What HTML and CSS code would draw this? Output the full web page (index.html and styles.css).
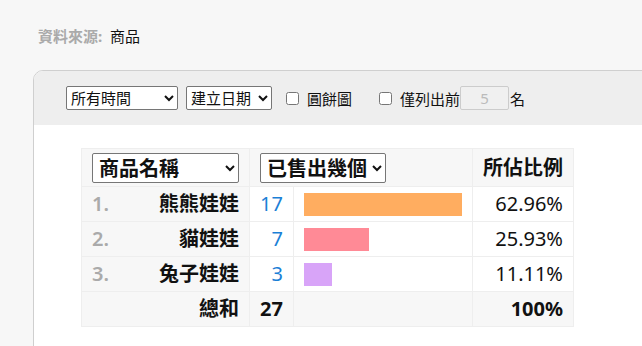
FILE: index.html
```html
<!DOCTYPE html>
<html>
<head>
    <link rel="stylesheet" href="styles.css">
</head>
<body>

    <div class="source">
        <span class="source-label">資料來源:</span> 商品
    </div>

    <div class="card">
        <div class="toolbar">
            <select class="range">
                <option>所有時間</option>
                <option>今天</option>
                <option>本週</option>
            </select>
            <select class="date-field">
                <option>建立日期</option>
                <option>更新日期</option>
            </select>
            <label class="check"><input type="checkbox">圓餅圖</label>
            <label class="check top-n"><input type="checkbox">僅列出前<input type="text" class="top-count" placeholder="5" disabled>名</label>
        </div>

        <div class="report">
            <table class="stats">
                <colgroup>
                    <col class="col-name">
                    <col class="col-count">
                    <col class="col-bar">
                    <col class="col-pct">
                </colgroup>
                <tr class="head">
                    <th class="name">
                        <select class="head-select wide">
                            <option>商品名稱</option>
                        </select>
                    </th>
                    <th colspan="2" class="left">
                        <select class="head-select">
                            <option>已售出幾個</option>
                        </select>
                    </th>
                    <th class="pct">所佔比例</th>
                </tr>
                <tr>
                    <td class="name"><span class="rank">1.</span>熊熊娃娃</td>
                    <td class="count">17</td>
                    <td class="bar-cell"><div class="bar orange" style="width: 100%;"></div></td>
                    <td class="pct">62.96%</td>
                </tr>
                <tr>
                    <td class="name"><span class="rank">2.</span>貓娃娃</td>
                    <td class="count">7</td>
                    <td class="bar-cell"><div class="bar pink" style="width: 41.2%;"></div></td>
                    <td class="pct">25.93%</td>
                </tr>
                <tr>
                    <td class="name"><span class="rank">3.</span>兔子娃娃</td>
                    <td class="count">3</td>
                    <td class="bar-cell"><div class="bar purple" style="width: 17.6%;"></div></td>
                    <td class="pct">11.11%</td>
                </tr>
                <tr class="total">
                    <td class="name">總和</td>
                    <td class="count">27</td>
                    <td class="bar-cell"></td>
                    <td class="pct">100%</td>
                </tr>
            </table>
        </div>
    </div>

</body>
</html>
```

FILE: styles.css
```css
body {
    font-family: "Noto Sans", "Noto Sans CJK TC", sans-serif;
    background-color: #f7f7f7;
    color: #111;
    margin: 0;
    padding: 0;
    overflow: hidden;
}

.source {
    font-size: 15px;
    line-height: 20px;
    padding: 26px 0 0 38px;
}

.source-label {
    color: #aaa;
    font-weight: bold;
    margin-right: 4px;
}

.card {
    margin: 24px -20px 0 33px;
    border: 1px solid #cfcfcf;
    border-radius: 10px 0 0 0;
    background-color: #fff;
    overflow: hidden;
    height: 400px;
}

.toolbar {
    background-color: #eee;
    height: 54px;
    padding-left: 32px;
    display: flex;
    align-items: center;
    font-size: 15px;
}

.toolbar select {
    font-family: inherit;
    font-size: 15px;
    height: 24px;
    border: 1px solid #767676;
    border-radius: 2px;
    background-color: #fff;
    color: #111;
    margin-right: 8px;
}

.toolbar .range {
    width: 112px;
}

.toolbar .date-field {
    width: 86px;
}

.check {
    display: flex;
    align-items: center;
    margin-left: 4px;
}

.check input[type="checkbox"] {
    width: 13px;
    height: 13px;
    margin: 0 8px 0 2px;
}

.top-n {
    margin-left: 25px;
}

.top-count {
    width: 49px;
    height: 24px;
    box-sizing: border-box;
    border: 1px solid #ccc;
    border-radius: 2px;
    background-color: #f0f0f0;
    font-family: inherit;
    font-size: 15px;
    text-align: center;
    padding: 0;
    margin: 0 1px 0 0;
}

.top-count::placeholder {
    color: #bbb;
}

.report {
    padding: 23px 0 0 47px;
}

.stats {
    border-collapse: collapse;
    table-layout: fixed;
    width: 492px;
    font-size: 20px;
}

.col-name { width: 168px; }
.col-count { width: 44px; }
.col-bar { width: 179px; }
.col-pct { width: 101px; }

.stats th,
.stats td {
    border: 1px solid #eee;
    padding: 4px 10px;
    line-height: 26px;
    height: 26px;
    background-color: #fff;
}

.stats .head th {
    background-color: #f7f7f7;
    height: 29px;
    padding: 4px 10px 3px;
}

.stats .left {
    text-align: left;
}

.head-select {
    font-family: inherit;
    font-size: 20px;
    font-weight: bold;
    height: 30px;
    border: 1px solid #767676;
    border-radius: 2px;
    background-color: #fff;
    color: #111;
    padding: 0 2px;
}

.head-select.wide {
    width: 100%;
}

.stats td.name {
    background-color: #f7f7f7;
    text-align: right;
    font-weight: bold;
}

.rank {
    float: left;
    color: #aaa;
    font-weight: 600;
}

.count {
    text-align: right;
    color: #1b7fd6;
}

.pct {
    text-align: right;
}

.bar {
    height: 23px;
}

.orange { background-color: #ffad60; }
.pink { background-color: #ff8a96; }
.purple { background-color: #d8a4f8; }

.stats .total td {
    background-color: #f7f7f7;
    font-weight: bold;
    color: #111;
}
```
